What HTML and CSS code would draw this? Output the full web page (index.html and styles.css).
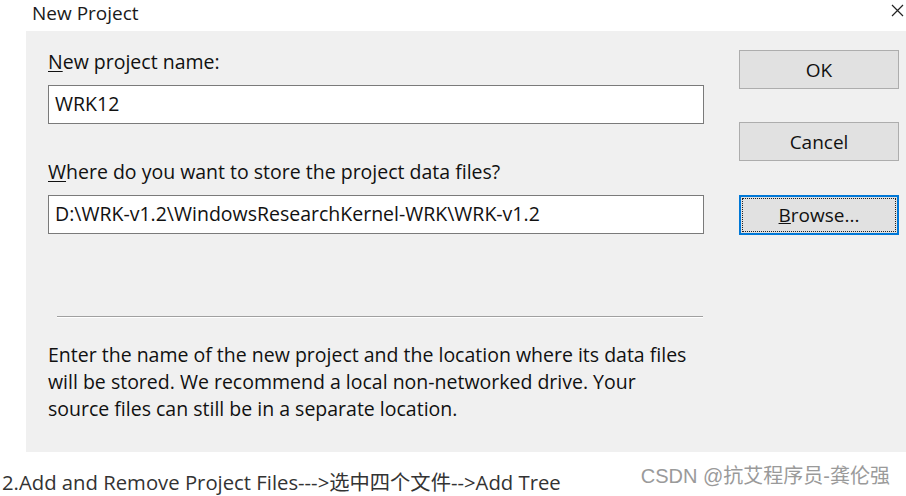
FILE: index.html
```html
<!DOCTYPE html>
<html>
<head>
<meta charset="utf-8">
<link rel="stylesheet" href="styles.css">
</head>
<body>
<div class="page">
  <div class="titlebar">
    <span class="title">New Project</span>
    <span class="close">
      <svg width="13" height="13" viewBox="0 0 13 13"><path d="M1 1 L12 12 M12 1 L1 12" stroke="#222" stroke-width="1.2" fill="none"/></svg>
    </span>
  </div>
  <div class="dialog">
    <div class="main">
      <div class="label"><u>N</u>ew project name:</div>
      <div class="input">WRK12</div>
      <div class="label label2"><u>W</u>here do you want to store the project data files?</div>
      <div class="input">D:\WRK-v1.2\WindowsResearchKernel-WRK\WRK-v1.2</div>
      <div class="sep"></div>
      <p class="desc">Enter the name of the new project and the location where its data files<br>will be stored. We recommend a local non-networked drive. Your<br>source files can still be in a separate location.</p>
    </div>
    <div class="buttons">
      <div class="btn">OK</div>
      <div class="btn">Cancel</div>
      <div class="btn focus"><span class="inner"><u>B</u>rowse...</span></div>
    </div>
  </div>
  <div class="caption">2.Add and Remove Project Files---&gt;选中四个文件--&gt;Add Tree</div>
  <div class="watermark">CSDN @抗艾程序员-龚伦强</div>
</div>
</body>
</html>
```
FILE: styles.css
```css
html, body {
  margin: 0;
  padding: 0;
  background: #ffffff;
}
.page {
  position: relative;
  width: 906px;
  height: 496px;
  overflow: hidden;
  font-family: "Open Sans", "Noto Sans", "Liberation Sans", sans-serif;
  color: #000;
}
.titlebar {
  height: 31px;
  display: flex;
  align-items: flex-start;
  justify-content: space-between;
  padding: 0 1px 0 32px;
  box-sizing: border-box;
}
.title {
  font-size: 19px;
  line-height: 26px;
  color: #1a1a1a;
}
.close {
  display: flex;
  margin-top: 4px;
  margin-right: 1px;
}
.dialog {
  margin-left: 26px;
  height: 421px;
  background: #f0f0f0;
  display: flex;
  padding-top: 19px;
  box-sizing: border-box;
}
.main {
  width: 656px;
  padding-left: 22px;
  display: flex;
  flex-direction: column;
}
.label {
  font-size: 19.5px;
  line-height: 24px;
  height: 24px;
  color: #111;
  white-space: nowrap;
}
.label u { text-underline-offset: 2px; }
.label2 { margin-top: 36px; }
.input {
  margin-top: 11px;
  height: 39px;
  box-sizing: border-box;
  border: 1px solid #7a7a7a;
  background: #fff;
  font-size: 19.5px;
  line-height: 35px;
  padding-left: 6px;
  color: #111;
  white-space: nowrap;
}
.sep {
  margin-top: 82px;
  margin-left: 9px;
  height: 1px;
  background: #a0a0a0;
  border-bottom: 1px solid #ffffff;
  width: 646px;
}
.desc {
  margin: 23px 0 0 0;
  font-size: 19.5px;
  line-height: 27px;
  color: #111;
  white-space: nowrap;
}
.buttons {
  margin-left: 35px;
  width: 160px;
  display: flex;
  flex-direction: column;
  gap: 33px;
}
.btn {
  height: 39px;
  box-sizing: border-box;
  border: 1px solid #adadad;
  background: #e1e1e1;
  font-size: 19px;
  display: flex;
  align-items: center;
  justify-content: center;
  color: #111;
}
.btn.focus {
  border: 2px solid #0078d7;
  padding: 1px;
  height: 40px;
  margin-top: 1px;
}
.btn.focus .inner {
  flex: 1;
  align-self: stretch;
  border: 1px dotted #222;
  display: flex;
  align-items: center;
  justify-content: center;
}
.caption {
  margin-top: 16px;
  padding-left: 2px;
  font-size: 20.3px;
  line-height: 28px;
  color: #333;
  font-family: "Open Sans", "Noto Sans CJK SC", sans-serif;
  white-space: nowrap;
}
.watermark {
  position: absolute;
  right: 16px;
  top: 463px;
  font-size: 20px;
  line-height: 26px;
  color: #9a9a9a;
  font-family: "Liberation Sans", "Noto Sans CJK SC", sans-serif;
  white-space: nowrap;
}
```
